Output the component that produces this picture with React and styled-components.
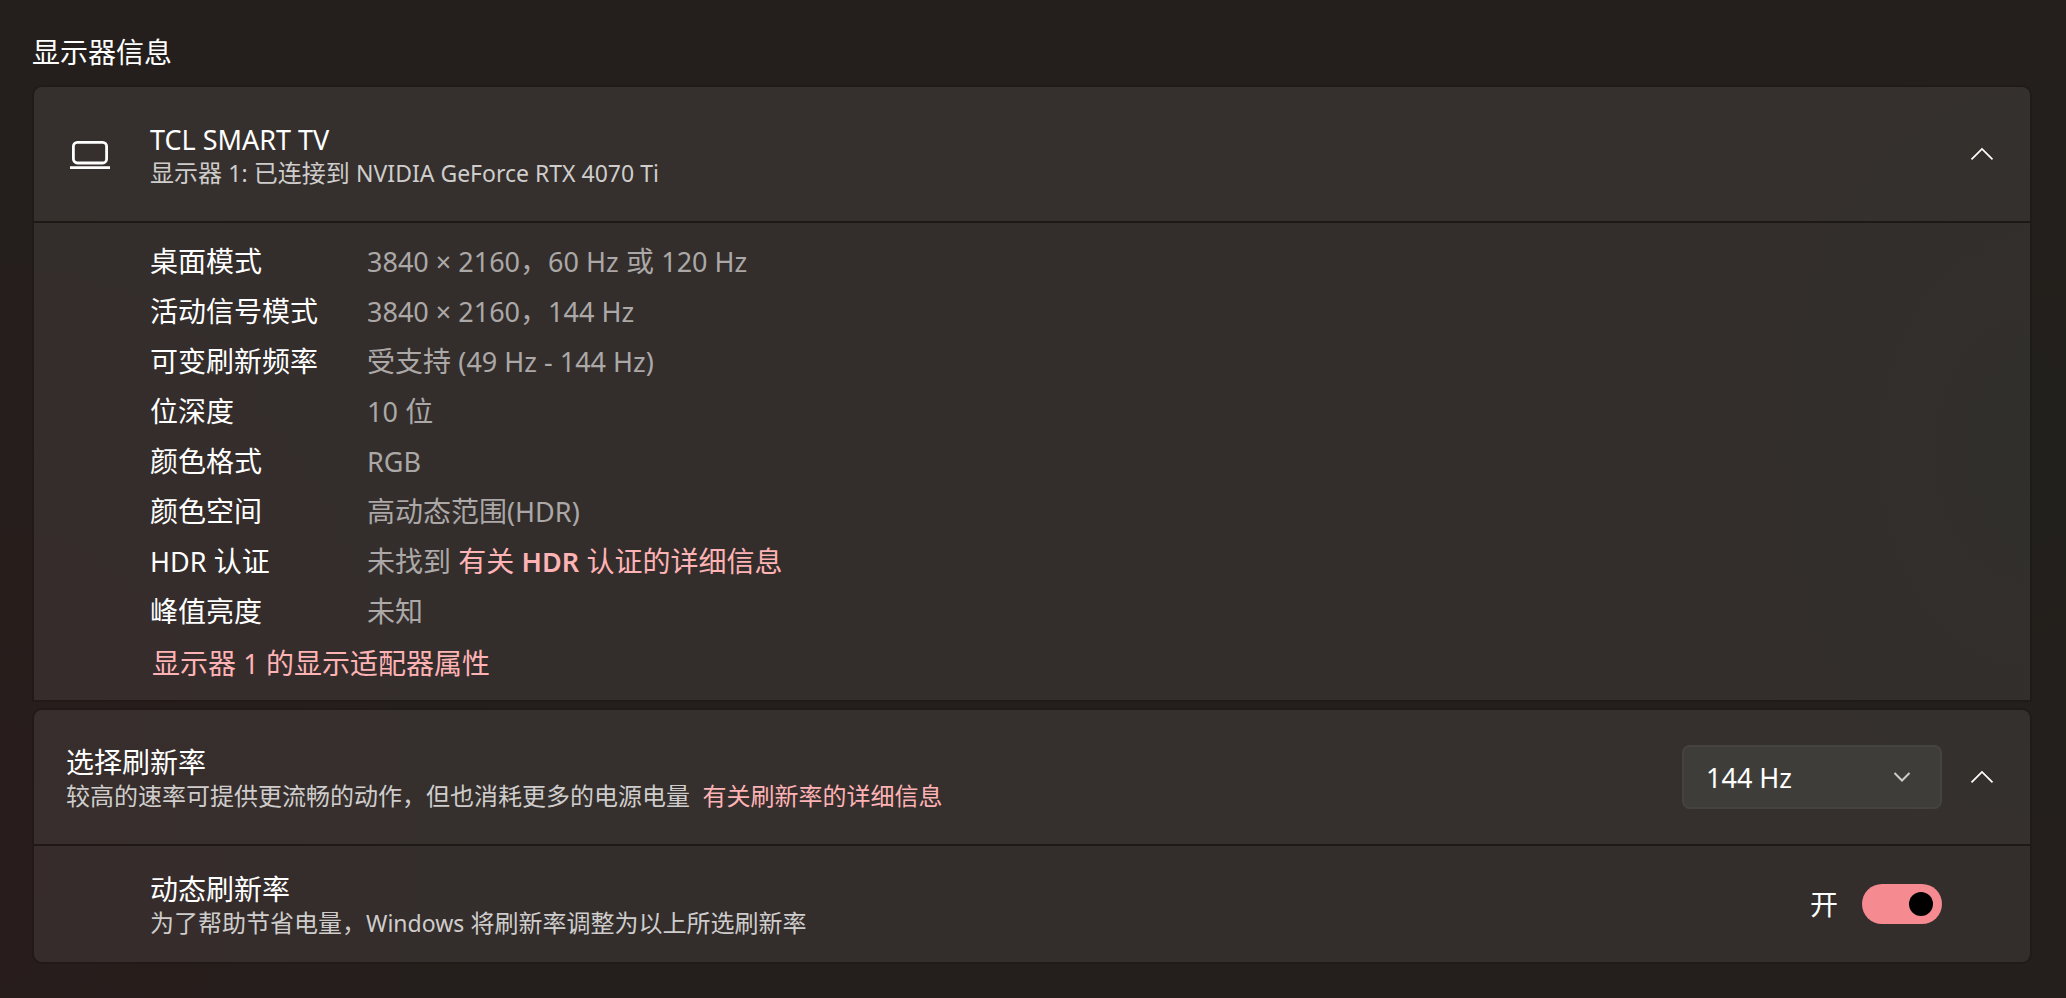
import React from 'react';
import styled, { createGlobalStyle } from 'styled-components';

const GlobalStyle = createGlobalStyle`
html {
  min-height: 100%;
  background:
    radial-gradient(ellipse 26% 75% at 0% 85%, rgba(41, 28, 27, .8), rgba(41, 28, 27, 0)),
    radial-gradient(ellipse 16% 50% at 98% 45%, rgba(33, 33, 28, .6), rgba(33, 33, 28, 0)),
    #241f1c;
}
body {
  margin: 0;
  color: #fff;
  font-family: "Noto Sans", "Noto Sans CJK SC", sans-serif;
  font-size: 28px;
  line-height: 36px;
}
`;
const Page = styled.main`
padding: 34px 34px 32px 32px;
`;
const Heading = styled.h1`
margin: 0 0 15px;
font-size: 28px;
font-weight: 400;
line-height: 36px;
`;
const Card = styled.section`
margin-bottom: 6px;
border: 2px solid rgba(0, 0, 0, .12);
border-radius: ${({ $open }) => ($open ? '10px 10px 0 0' : '10px')};
overflow: hidden;
`;
const Header = styled.header`
display: flex;
align-items: center;
height: 134px;
padding: 0 32px;
background: rgba(255, 255, 255, .08);
border-bottom: 2px solid rgba(0, 0, 0, .18);
background-clip: padding-box;
`;
const IconSlot = styled.span`
display: flex;
width: 84px;
padding-left: 4px;
box-sizing: border-box;
`;
const Text = styled.div`
flex: 1;
min-width: 0;
padding-top: 2px;
`;
const Title = styled.h2`
margin: 0;
font-size: 28px;
font-weight: 400;
line-height: 36px;
`;
const Caption = styled.p`
margin: 0;
color: #cfcdcc;
font-size: 24px;
line-height: 32px;
`;
/* Latin runs sit a step smaller than the CJK text around them */
const Latin = styled.span`
font-size: ${({ $small }) => ($small ? '23px' : '27px')};
font-weight: ${({ $strong }) => ($strong ? 600 : 'inherit')};
line-height: 1;
`;
const Link = styled.a`
color: #ffb3b5;
text-decoration: none;
`;
const Details = styled.div`
padding: 13px 32px 10px 116px;
background: rgba(255, 255, 255, .07);
`;
const List = styled.dl`
display: grid;
grid-template-columns: 217px 1fr;
grid-auto-rows: 50px;
margin: 0;
line-height: 50px;
`;
const Label = styled.dt`
margin: 0;
`;
const Value = styled.dd`
margin: 0;
color: #aba8a7;
`;
const AdapterLink = styled.p`
margin: 0;
padding-left: 2px;
line-height: 54px;
`;
const SubRow = styled.div`
display: flex;
align-items: center;
height: 116px;
padding: 0 88px 0 116px;
background: rgba(255, 255, 255, .07);
`;
const SelectWrap = styled.div`
display: grid;
align-items: center;
width: 260px;
margin-right: 20px;
`;
const Select = styled.select`
grid-area: 1 / 1;
appearance: none;
width: 100%;
height: 64px;
padding: 0 22px;
border: 2px solid rgba(255, 255, 255, .03);
border-radius: 8px;
background: #3e3d39;
color: #fff;
font-family: inherit;
font-size: 27px;
`;
const SelectArrow = styled.svg`
grid-area: 1 / 1;
justify-self: end;
margin-right: 31px;
pointer-events: none;
`;
const ExpandButton = styled.button`
display: flex;
align-items: center;
justify-content: center;
width: 40px;
height: 40px;
margin-right: -4px;
padding: 0;
border: 0;
background: none;
color: #fff;
`;
const SwitchLabel = styled.label`
display: flex;
align-items: center;
gap: 24px;
`;
const Switch = styled.input`
appearance: none;
display: flex;
align-items: center;
justify-content: flex-end;
width: 80px;
height: 40px;
margin: 0;
padding: 0 9px;
border-radius: 20px;
box-sizing: border-box;
background: #f58a91;
&::before {
  content: '';
  width: 24px;
  height: 24px;
  border-radius: 50%;
  background: #000;
}
&:not(:checked) {
  justify-content: flex-start;
  background: #6b6766;
}
`;

const modes = [
  ['桌面模式', <><Latin>3840 × 2160</Latin>，<Latin>60 Hz</Latin> 或 <Latin>120 Hz</Latin></>],
  ['活动信号模式', <><Latin>3840 × 2160</Latin>，<Latin>144 Hz</Latin></>],
  ['可变刷新频率', <>受支持 <Latin>(49 Hz - 144 Hz)</Latin></>],
  ['位深度', <><Latin>10</Latin> 位</>],
  ['颜色格式', <Latin>RGB</Latin>],
  ['颜色空间', <>高动态范围<Latin>(HDR)</Latin></>],
  [
    <><Latin>HDR</Latin> 认证</>,
    <>未找到 <Link href="#hdr">有关 <Latin $strong>HDR</Latin> 认证的详细信息</Link></>,
  ],
  ['峰值亮度', '未知'],
];

const Expander = ({ label }) => (
  <ExpandButton type="button" aria-expanded="true" aria-label={label}>
    <svg width="24" height="14" viewBox="0 0 24 14" fill="none" stroke="currentColor" strokeWidth="1.700">
      <path d="M1.500 12.300 12 2l10.500 10.300" />
    </svg>
  </ExpandButton>
);

const MonitorIcon = () => (
  <svg width="40" height="32" viewBox="0 0 40 32" fill="none" stroke="#fff" strokeWidth="2.800">
    <rect x="3.400" y="4.400" width="33.200" height="20.600" rx="4" />
    <path d="M0 29.600h40" />
  </svg>
);

const App = () => {
  const [rate, setRate] = React.useState('144');
  const [dynamic, setDynamic] = React.useState(true);
  return (
    <>
      <GlobalStyle />
      <Page lang="zh-CN">
        <Heading>显示器信息</Heading>
        <Card $open>
          <Header>
            <IconSlot><MonitorIcon /></IconSlot>
            <Text>
              <Title><Latin>TCL SMART TV</Latin></Title>
              <Caption>
                显示器 <Latin $small>1:</Latin> 已连接到 <Latin $small>NVIDIA GeForce RTX 4070 Ti</Latin>
              </Caption>
            </Text>
            <Expander label="TCL SMART TV" />
          </Header>
          <Details>
            <List>
              {modes.map(([label, value], i) => (
                <React.Fragment key={i}>
                  <Label>{label}</Label>
                  <Value>{value}</Value>
                </React.Fragment>
              ))}
            </List>
            <AdapterLink>
              <Link href="#adapter">显示器 <Latin>1</Latin> 的显示适配器属性</Link>
            </AdapterLink>
          </Details>
        </Card>
        <Card>
          <Header>
            <Text>
              <Title as="label" htmlFor="rate">选择刷新率</Title>
              <Caption>
                较高的速率可提供更流畅的动作，但也消耗更多的电源电量&nbsp; <Link href="#rate-info">有关刷新率的详细信息</Link>
              </Caption>
            </Text>
            <SelectWrap>
              <Select id="rate" value={rate} onChange={(e) => setRate(e.target.value)}>
                <option value="60">60 Hz</option>
                <option value="120">120 Hz</option>
                <option value="144">144 Hz</option>
              </Select>
              <SelectArrow width="18" height="12" viewBox="0 0 18 12" fill="none" stroke="#cfcdcc" strokeWidth="2">
                <path d="M1.500 2 9 9.500 16.500 2" />
              </SelectArrow>
            </SelectWrap>
            <Expander label="选择刷新率" />
          </Header>
          <SubRow>
            <Text>
              <Title>动态刷新率</Title>
              <Caption>
                为了帮助节省电量，<Latin $small>Windows</Latin> 将刷新率调整为以上所选刷新率
              </Caption>
            </Text>
            <SwitchLabel>
              {dynamic ? '开' : '关'}
              <Switch
                type="checkbox"
                role="switch"
                aria-label="动态刷新率"
                checked={dynamic}
                onChange={(e) => setDynamic(e.target.checked)}
              />
            </SwitchLabel>
          </SubRow>
        </Card>
      </Page>
    </>
  );
};
export default App;
